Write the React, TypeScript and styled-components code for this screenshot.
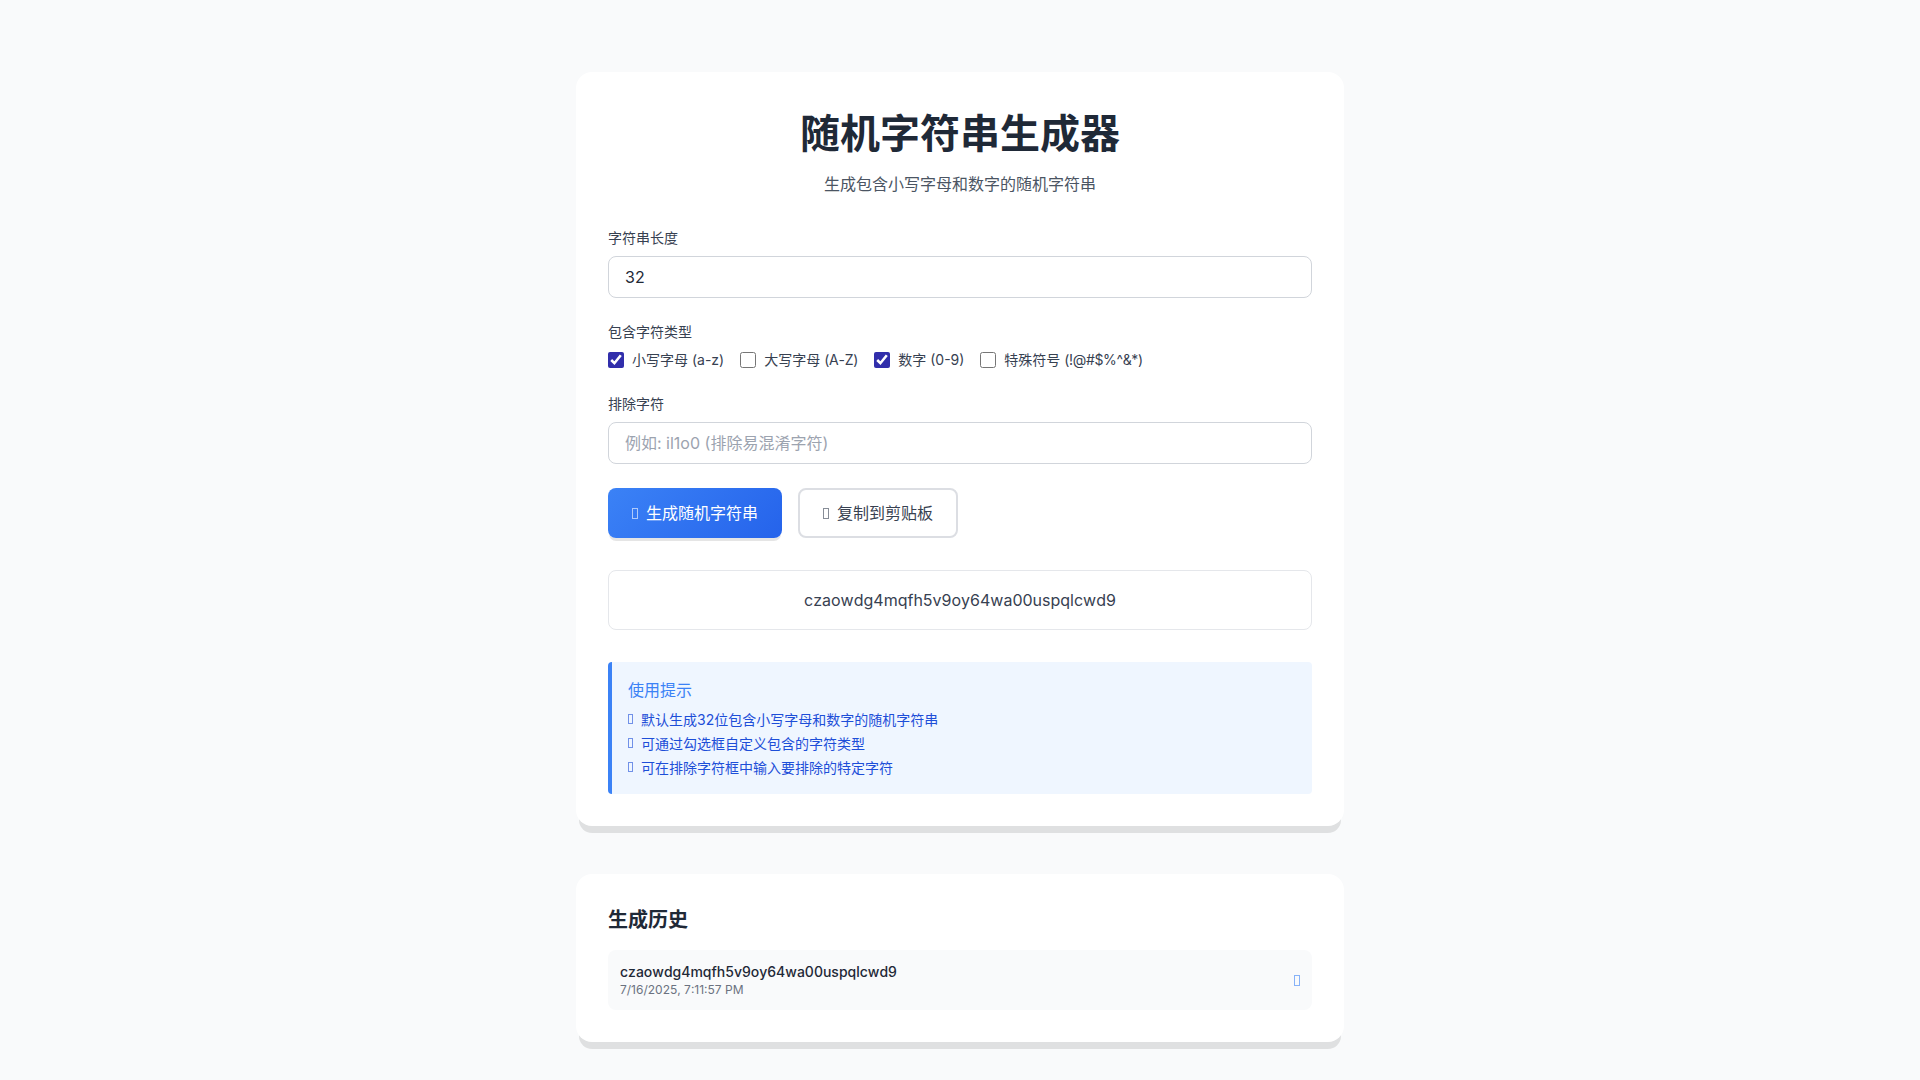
import React from "react";
import styled, { createGlobalStyle } from "styled-components";

const Global = createGlobalStyle`
  * { box-sizing: border-box; }
  html, body { margin: 0; padding: 0; }
  body {
    background: #f9fafb;
    font-family: Inter, "Noto Sans CJK SC", sans-serif;
    font-kerning: none;
    color: #1f2937;
    line-height: 1.5;
  }
`;

const Page = styled.main`
  width: 768px;
  margin: 0 auto;
  padding: 72px 0 20px;
  display: flex;
  flex-direction: column;
  gap: 48px;
`;

const Card = styled.section`
  background: #fff;
  border-radius: 16px;
  padding: 32px;
  box-shadow: 0 10px 0 -3px rgba(0, 0, 0, 0.1);
`;

const Header = styled.header`
  text-align: center;
  margin-bottom: 32px;
`;

const Title = styled.h1`
  margin: 0 0 8px;
  font-size: 40px;
  font-weight: 700;
  line-height: 60px;
  color: #1f2937;
`;

const Subtitle = styled.p`
  margin: 0;
  font-size: 16px;
  line-height: 24px;
  color: #4b5563;
`;

const Field = styled.div`
  margin-bottom: 24px;
`;

const Label = styled.label`
  display: block;
  margin-bottom: 8px;
  font-size: 14px;
  line-height: 20px;
  font-weight: 400;
  color: #374151;
`;

const TextInput = styled.input`
  display: block;
  width: 100%;
  height: 42px;
  padding: 8px 16px;
  border: 1px solid #d1d5db;
  border-radius: 8px;
  background: #fff;
  font: inherit;
  font-size: 16px;
  color: #1f2937;
  outline: none;
  &::placeholder { color: #9ca3af; opacity: 1; }
`;

const Options = styled.div`
  display: flex;
  gap: 16px;
`;

const Option = styled.label`
  display: flex;
  align-items: center;
  gap: 8px;
  font-size: 14px;
  line-height: 20px;
  color: #374151;
`;

const Symbols = styled.span<{ $squeeze: number }>`
  letter-spacing: ${(p) => p.$squeeze}px;
`;

const Check = styled.input`
  width: 16px;
  height: 16px;
  margin: 0;
  accent-color: #312eab;
`;

const Actions = styled.div`
  display: flex;
  gap: 16px;
  margin-bottom: 32px;
`;

const Button = styled.button<{ $primary?: boolean }>`
  height: 50px;
  padding: 0 ${(p) => (p.$primary ? "24px" : "23px")};
  display: flex;
  align-items: center;
  gap: 8px;
  border-radius: 8px;
  font: inherit;
  font-size: 16px;
  font-weight: 400;
  color: ${(p) => (p.$primary ? "#fff" : "#374151")};
  background: ${(p) =>
    p.$primary ? "linear-gradient(135deg, #3b82f6, #2563eb)" : "#fff"};
  border: ${(p) => (p.$primary ? "none" : "2px solid #dcdee3")};
  box-shadow: ${(p) => (p.$primary ? "0 4px 0 -1px rgba(0,0,0,.1)" : "none")};
`;

/* The reference shows a missing-glyph box where its icon font did not load. */
const Tofu = styled.span<{ $w: number; $h: number }>`
  flex: none;
  width: ${(p) => p.$w}px;
  height: ${(p) => p.$h}px;
  border: 1px solid currentColor;
  opacity: 0.6;
`;

const Output = styled.div`
  height: 60px;
  margin-bottom: 32px;
  display: flex;
  align-items: center;
  justify-content: center;
  border: 1px solid #e5e7eb;
  border-radius: 8px;
  background: #fff;
  font-size: 16px;
  color: #374151;
`;

const Tips = styled.aside`
  height: 132px;
  padding: 16px;
  border-left: 4px solid #3b82f6;
  border-radius: 4px;
  background: #eff6ff;
`;

const TipsTitle = styled.h3`
  margin: 0 0 5px;
  font-size: 16px;
  line-height: 24px;
  font-weight: 400;
  color: #3b82f6;
`;

const TipsList = styled.ul`
  margin: 0;
  padding: 0;
  list-style: none;
`;

const Tip = styled.li`
  display: flex;
  align-items: center;
  gap: 8px;
  height: 24px;
  font-size: 14px;
  color: #1d4ed8;
`;

const HistoryTitle = styled.h2`
  margin: 0 0 16px;
  font-size: 20px;
  line-height: 28px;
  font-weight: 700;
  color: #1f2937;
`;

const HistoryRow = styled.div`
  height: 60px;
  padding: 0 12px;
  display: flex;
  align-items: center;
  justify-content: space-between;
  border-radius: 8px;
  background: #f9fafb;
`;

const HistoryValue = styled.div`
  font-size: 14px;
  line-height: 20px;
  font-weight: 500;
  color: #1f2937;
`;

const HistoryTime = styled.div`
  font-size: 12px;
  line-height: 16px;
  color: #6b7280;
`;

const CopyIcon = styled.span`
  display: flex;
  color: #3b82f6;
`;

export default function App() {
  return (
    <>
      <Global />
      <Page>
        <Card>
          <Header>
            <Title>随机字符串生成器</Title>
            <Subtitle>生成包含小写字母和数字的随机字符串</Subtitle>
          </Header>
          <Field>
            <Label>字符串长度</Label>
            <TextInput defaultValue="32" />
          </Field>
          <Field>
            <Label>包含字符类型</Label>
            <Options>
              <Option><Check type="checkbox" defaultChecked /><span>小写字母 (a-z)</span></Option>
              <Option><Check type="checkbox" /><span>大写字母 <Symbols $squeeze={-0.2}>(A-Z)</Symbols></span></Option>
              <Option><Check type="checkbox" defaultChecked /><span>数字 (0-9)</span></Option>
              <Option><Check type="checkbox" /><span>特殊符号 <Symbols $squeeze={-0.35}>(!@#$%^&*)</Symbols></span></Option>
            </Options>
          </Field>
          <Field>
            <Label>排除字符</Label>
            <TextInput placeholder="例如: il1o0 (排除易混淆字符)" />
          </Field>
          <Actions>
            <Button $primary><Tofu $w={6} $h={11} />生成随机字符串</Button>
            <Button><Tofu $w={6} $h={11} />复制到剪贴板</Button>
          </Actions>
          <Output>czaowdg4mqfh5v9oy64wa00uspqlcwd9</Output>
          <Tips>
            <TipsTitle>使用提示</TipsTitle>
            <TipsList>
              <Tip><Tofu $w={5} $h={10} />默认生成32位包含小写字母和数字的随机字符串</Tip>
              <Tip><Tofu $w={5} $h={10} />可通过勾选框自定义包含的字符类型</Tip>
              <Tip><Tofu $w={5} $h={10} />可在排除字符框中输入要排除的特定字符</Tip>
            </TipsList>
          </Tips>
        </Card>
        <Card>
          <HistoryTitle>生成历史</HistoryTitle>
          <HistoryRow>
            <div>
              <HistoryValue>czaowdg4mqfh5v9oy64wa00uspqlcwd9</HistoryValue>
              <HistoryTime>7/16/2025, 7:11:57 PM</HistoryTime>
            </div>
            <CopyIcon><Tofu $w={6} $h={11} /></CopyIcon>
          </HistoryRow>
        </Card>
      </Page>
    </>
  );
}
